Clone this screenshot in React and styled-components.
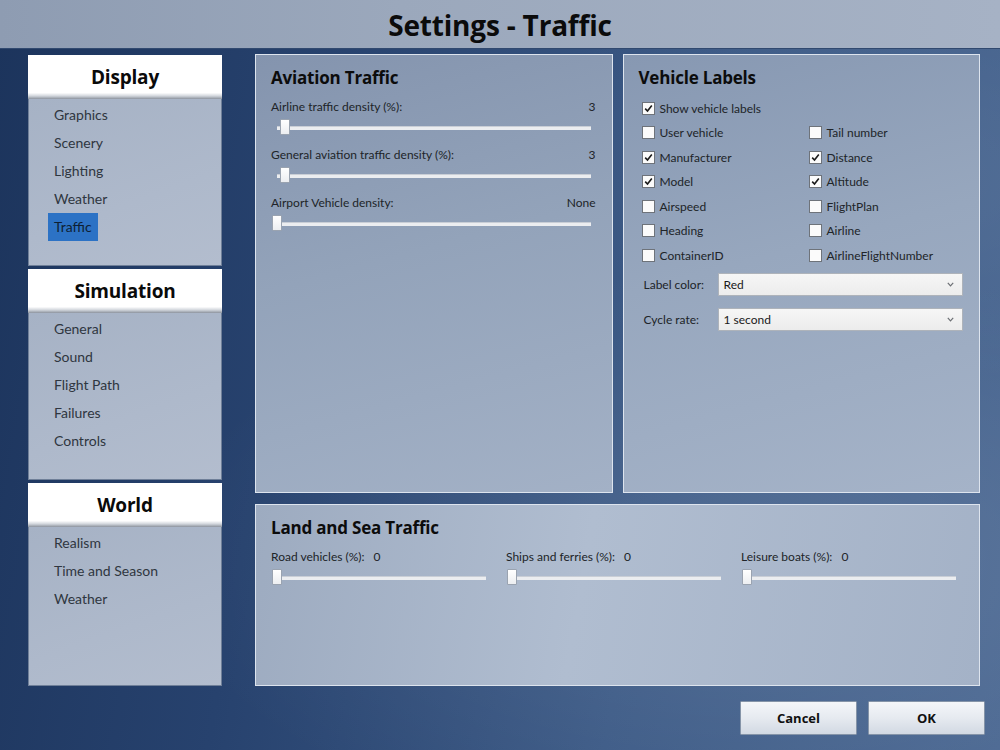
import React from 'react';
import styled, { createGlobalStyle } from 'styled-components';

const GlobalStyle = createGlobalStyle`
  html, body {
    margin: 0;
    padding: 0;
    width: 1000px;
    height: 750px;
    overflow: hidden;
  }
  body {
    font-family: Lato, "Open Sans", "Liberation Sans", sans-serif;
    color: #1d1d1d;
  }
`;

const Screen = styled.div`
  width: 1000px;
  height: 750px;
  display: flex;
  flex-direction: column;
  background:
    radial-gradient(ellipse 900px 420px at 780px 560px, rgba(255,255,255,0.10), transparent 70%),
    radial-gradient(ellipse 600px 300px at 900px 180px, rgba(255,255,255,0.06), transparent 70%),
    linear-gradient(100deg, #1c345c 0%, #27426e 30%, #3c5a86 65%, #4b6892 100%);
`;

const TitleBar = styled.header`
  height: 48px;
  flex-shrink: 0;
  display: flex;
  align-items: center;
  justify-content: center;
  background: linear-gradient(90deg, #8e9cb2 0%, #9ba8bc 40%, #a6b2c5 100%);
  border-bottom: 1px solid #31496f;
`;

const Title = styled.h1`
  margin: 0;
  font-family: "Open Sans", Lato, sans-serif;
  font-size: 28px;
  font-weight: 700;
  letter-spacing: -0.2px;
  color: #0b0b0b;
  padding-top: 2px;
`;

const Body = styled.div`
  display: flex;
  gap: 33px;
  padding: 5px 20px 0 28px;
`;

const Sidebar = styled.nav`
  width: 194px;
  flex-shrink: 0;
  display: flex;
  flex-direction: column;
  padding-top: 1px;
`;

const Group = styled.section`
  display: flex;
  flex-direction: column;
  margin-bottom: ${p => p.gapBelow || 0}px;
`;

const GroupHeader = styled.div`
  height: 44px;
  display: flex;
  align-items: center;
  justify-content: center;
  background: linear-gradient(180deg, #ffffff 0%, #ffffff 86%, #d2d6dc 93%, #8c939e 100%);
  font-family: "Open Sans", Lato, sans-serif;
  font-size: 19px;
  font-weight: 700;
  color: #0a0a0a;
  letter-spacing: -0.2px;
`;

const GroupItems = styled.ul`
  list-style: none;
  margin: 0;
  padding: 2px 0 0 19px;
  height: ${p => p.h}px;
  box-sizing: border-box;
  background: linear-gradient(160deg, #a6b2c5 0%, #aeb9cb 60%, #b3bdce 100%);
  border: 1px solid #6f7f98;
  border-top: none;
`;

const Item = styled.li`
  display: flex;
`;

const ItemLabel = styled.span`
  height: 28px;
  line-height: 28px;
  padding: 0 6px;
  font-size: 14px;
  color: ${p => (p.active ? '#0e1f33' : '#2f3640')};
  background: ${p => (p.active ? '#2c72c5' : 'transparent')};
`;

const Main = styled.main`
  flex: 1;
  min-width: 0;
  display: flex;
  flex-direction: column;
  gap: 11px;
`;

const TopRow = styled.div`
  display: flex;
  gap: 10px;
  height: 439px;
`;

const Panel = styled.section`
  flex: ${p => p.flex || 1};
  min-width: 0;
  box-sizing: border-box;
  border: 1px solid #dde4ee;
  padding: 11px 16px 0 15px;
  background: ${p => p.bg};
`;

const PanelTitle = styled.h2`
  margin: 0;
  height: 24px;
  line-height: 24px;
  font-family: "Open Sans", Lato, sans-serif;
  font-size: 17px;
  font-weight: 700;
  color: #0c0c0c;
  letter-spacing: -0.2px;
`;

const SliderList = styled.div`
  margin-top: 9px;
  display: flex;
  flex-direction: column;
`;

const SliderBlock = styled.div`
  display: flex;
  flex-direction: column;
  margin-bottom: 9px;
`;

const LabelRow = styled.div`
  display: flex;
  justify-content: ${p => (p.spread ? 'space-between' : 'flex-start')};
  gap: 9px;
  height: 16px;
  line-height: 16px;
  font-size: 12px;
  color: #202428;
`;

const SliderBox = styled.div`
  position: relative;
  height: 20px;
  margin-top: 3px;
  margin-left: 1px;
  width: ${p => p.w ? `${p.w}px` : 'auto'};
`;

const Track = styled.div`
  position: absolute;
  left: 5px;
  right: 5px;
  top: 8px;
  height: 3px;
  background: #ebedf0;
  border-top: 1px solid #c9ced6;
`;

const Thumb = styled.div`
  position: absolute;
  top: 1px;
  width: 10px;
  height: 16px;
  box-sizing: border-box;
  border: 1px solid #9aa3b0;
  border-radius: 1px;
  background: linear-gradient(180deg, #ffffff 0%, #eceef1 100%);
`;

function Slider({ pos, w }) {
  return (
    <SliderBox w={w}>
      <Track />
      <Thumb style={{ left: `calc(${pos} * (100% - 10px))` }} />
    </SliderBox>
  );
}

const CheckGrid = styled.div`
  margin-top: 6px;
  margin-left: 3px;
  display: grid;
  grid-template-columns: 167px 1fr;
  grid-auto-rows: 24.5px;
`;

const CheckRow = styled.label`
  display: flex;
  align-items: center;
  gap: 5px;
  font-size: 12px;
  color: #202428;
  grid-column: ${p => (p.wide ? '1 / span 2' : 'auto')};
`;

const Box = styled.span`
  width: 13px;
  height: 13px;
  box-sizing: border-box;
  border: 1px solid #6e737a;
  background: #fbfbfb;
  display: flex;
  align-items: center;
  justify-content: center;
`;

function Check({ label, checked, wide }) {
  return (
    <CheckRow wide={wide}>
      <Box>
        {checked && (
          <svg width="9" height="9" viewBox="0 0 9 9">
            <path d="M1.2 4.6 L3.5 7 L7.8 1.4" fill="none" stroke="#1a1a1a" strokeWidth="1.6" />
          </svg>
        )}
      </Box>
      {label}
    </CheckRow>
  );
}

const FieldRow = styled.div`
  display: flex;
  align-items: center;
  margin-top: ${p => p.mt}px;
  margin-left: 5px;
`;

const FieldLabel = styled.span`
  width: 74px;
  font-size: 12px;
  color: #202428;
`;

const Select = styled.div`
  flex: 1;
  height: 23px;
  box-sizing: border-box;
  display: flex;
  align-items: center;
  justify-content: space-between;
  padding: 0 8px 0 5px;
  font-size: 12px;
  color: #1a1a1a;
  border: 1px solid #aeb3ba;
  background: linear-gradient(180deg, #f6f6f6 0%, #ececec 100%);
`;

const Chevron = () => (
  <svg width="7" height="5" viewBox="0 0 7 5">
    <path d="M0.8 0.8 L3.5 3.8 L6.2 0.8" fill="none" stroke="#6c6f74" strokeWidth="1.2" />
  </svg>
);

const LandRow = styled.div`
  margin-top: 9px;
  display: grid;
  grid-template-columns: 235px 235px 1fr;
`;

const Footer = styled.footer`
  display: flex;
  justify-content: flex-end;
  gap: 11px;
  padding: 15px 15px 0 0;
`;

const Button = styled.button`
  width: 117px;
  height: 34px;
  font-family: "Open Sans", Lato, sans-serif;
  font-size: 13px;
  font-weight: 700;
  color: #101010;
  border: 1px solid #8594a8;
  border-radius: 1px;
  background: linear-gradient(180deg, #f4f6f9 0%, #e6eaf0 50%, #d2d9e3 100%);
`;

const sidebar = [
  { title: 'Display', h: 167, gap: 3, items: ['Graphics', 'Scenery', 'Lighting', 'Weather', 'Traffic'], active: 'Traffic' },
  { title: 'Simulation', h: 167, gap: 3, items: ['General', 'Sound', 'Flight Path', 'Failures', 'Controls'] },
  { title: 'World', h: 159, gap: 0, items: ['Realism', 'Time and Season', 'Weather'] },
];

const aviation = [
  { label: 'Airline traffic density (%):', value: '3', pos: 0.027 },
  { label: 'General aviation traffic density (%):', value: '3', pos: 0.027 },
  { label: 'Airport Vehicle density:', value: 'None', pos: 0 },
];

const labels = [
  ['User vehicle', false], ['Tail number', false],
  ['Manufacturer', true], ['Distance', true],
  ['Model', true], ['Altitude', true],
  ['Airspeed', false], ['FlightPlan', false],
  ['Heading', false], ['Airline', false],
  ['ContainerID', false], ['AirlineFlightNumber', false],
];

const landSea = ['Road vehicles (%):', 'Ships and ferries (%):', 'Leisure boats (%):'];

export default function App() {
  return (
    <Screen>
      <GlobalStyle />
      <TitleBar>
        <Title>Settings - Traffic</Title>
      </TitleBar>
      <Body>
        <Sidebar>
          {sidebar.map(g => (
            <Group key={g.title} gapBelow={g.gap}>
              <GroupHeader>{g.title}</GroupHeader>
              <GroupItems h={g.h}>
                {g.items.map(it => (
                  <Item key={it}>
                    <ItemLabel active={it === g.active}>{it}</ItemLabel>
                  </Item>
                ))}
              </GroupItems>
            </Group>
          ))}
        </Sidebar>

        <Main>
          <TopRow>
            <Panel bg="linear-gradient(165deg, #8494ae 0%, #93a3ba 45%, #a3b1c6 100%)">
              <PanelTitle>Aviation Traffic</PanelTitle>
              <SliderList>
                {aviation.map(s => (
                  <SliderBlock key={s.label}>
                    <LabelRow spread>
                      <span>{s.label}</span>
                      <span>{s.value}</span>
                    </LabelRow>
                    <Slider pos={s.pos} />
                  </SliderBlock>
                ))}
              </SliderList>
            </Panel>

            <Panel bg="linear-gradient(165deg, #8798b2 0%, #97a7be 45%, #a5b3c8 100%)">
              <PanelTitle>Vehicle Labels</PanelTitle>
              <CheckGrid>
                <Check label="Show vehicle labels" checked wide />
                {labels.map(([l, c]) => (
                  <Check key={l} label={l} checked={c} />
                ))}
              </CheckGrid>
              <FieldRow mt={5}>
                <FieldLabel>Label color:</FieldLabel>
                <Select>Red<Chevron /></Select>
              </FieldRow>
              <FieldRow mt={12}>
                <FieldLabel>Cycle rate:</FieldLabel>
                <Select>1 second<Chevron /></Select>
              </FieldRow>
            </Panel>
          </TopRow>

          <Panel flex="none" style={{ height: 182 }} bg="linear-gradient(100deg, #9dabc0 0%, #b0bdd0 45%, #a4b2c7 100%)">
            <PanelTitle>Land and Sea Traffic</PanelTitle>
            <LandRow>
              {landSea.map(l => (
                <SliderBlock key={l}>
                  <LabelRow>
                    <span>{l}</span>
                    <span>0</span>
                  </LabelRow>
                  <Slider pos={0} w={219} />
                </SliderBlock>
              ))}
            </LandRow>
          </Panel>
        </Main>
      </Body>
      <Footer>
        <Button>Cancel</Button>
        <Button>OK</Button>
      </Footer>
    </Screen>
  );
}
